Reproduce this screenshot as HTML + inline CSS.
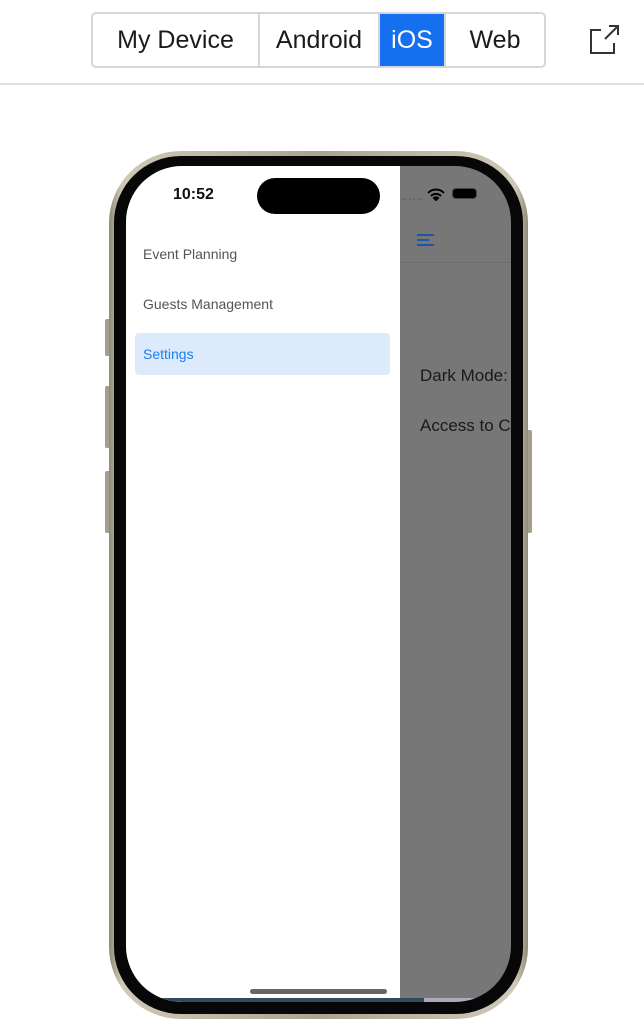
<!DOCTYPE html>
<html><head><meta charset="utf-8"><style>
*{margin:0;padding:0;box-sizing:border-box}
body{width:644px;height:1030px;background:#fff;position:relative;overflow:hidden;font-family:"Liberation Sans",sans-serif}
.seg{position:absolute;left:91px;top:12px;width:455px;height:56px;border:2px solid #d3d6da;border-radius:5px;display:flex;overflow:hidden}
.seg div{height:100%;display:flex;align-items:center;justify-content:center;font-size:25px;color:#1b1b1b;border-right:2px solid #d3d6da}
.seg div:last-child{border-right:none}
.hr{position:absolute;left:0;top:83px;width:644px;height:2px;background:#dcdee1}
.btn{position:absolute;background:#a49e8c;border-radius:2px}
.frame{position:absolute;left:109px;top:151px;width:419px;height:868px;border-radius:72px;background:linear-gradient(90deg,#8f8a7a,#cfc9b7 3%,#a9a391 50%,#cfc9b7 97%,#8f8a7a)}
.bezel{position:absolute;left:114px;top:156px;width:409px;height:858px;border-radius:67px;background:#070707}
.screen{position:absolute;left:126px;top:166px;width:385px;height:836px;border-radius:56px;overflow:hidden;background:#777}
.drawer{position:absolute;left:0;top:0;width:274px;height:100%;background:#fff}
.t{position:absolute;font-size:14px;color:#555}
</style></head><body>
<div class="seg">
<div style="width:167px">My Device</div>
<div style="width:120px">Android</div>
<div style="width:66px;background:#1570ef;color:#fff">iOS</div>
<div style="flex:1">Web</div>
</div>
<svg style="position:absolute;left:588px;top:24px" width="34" height="32" viewBox="0 0 34 32" fill="none" stroke="#333" stroke-width="2"><path d="M13 6H3v23h23V19"/><path d="M17 15L30 2M21 2h9v9"/></svg>
<div class="hr"></div>
<div class="btn" style="left:105px;top:319px;width:6px;height:37px"></div>
<div class="btn" style="left:105px;top:386px;width:6px;height:62px"></div>
<div class="btn" style="left:105px;top:471px;width:6px;height:62px"></div>
<div class="btn" style="left:526px;top:430px;width:6px;height:103px"></div>
<div class="frame"></div>
<div class="bezel"></div>
<div class="screen">
<div class="drawer">
<div class="t" style="left:47px;top:20px;font-size:16px;font-weight:bold;color:#111">10:52</div>
<div class="t" style="left:17px;top:80px">Event Planning</div>
<div class="t" style="left:17px;top:130px">Guests Management</div>
<div style="position:absolute;left:9px;top:167px;width:255px;height:42px;background:#ddeafc;border-radius:4px"></div>
<div class="t" style="left:17px;top:180px;color:#1a7ff0">Settings</div>
<div style="position:absolute;left:124px;top:823px;width:137px;height:5px;border-radius:3px;background:#666"></div>
<div style="position:absolute;left:0;top:832px;width:274px;height:4px;background:#34495e"></div>
</div>
<div style="position:absolute;left:274px;top:832px;width:24px;height:4px;background:#34495e"></div>
<div style="position:absolute;left:298px;top:832px;width:90px;height:4px;background:#aab"></div>
<div style="position:absolute;left:131px;top:12px;width:123px;height:36px;border-radius:18px;background:#000"></div>
<div style="position:absolute;left:274px;top:96px;width:111px;height:1px;background:#6d6d6d"></div>
<div style="position:absolute;left:276px;top:32px;width:20px;height:2px;border-top:2px dotted #666"></div>
<svg style="position:absolute;left:301px;top:22px" width="18" height="13" viewBox="0 0 18 13"><path d="M1 5a11 11 0 0 1 16 0M4 8a7 7 0 0 1 10 0M9 12l-2-2a3 3 0 0 1 4 0z" stroke="#000" stroke-width="2" fill="none"/></svg>
<div style="position:absolute;left:326px;top:22px;width:25px;height:11px;border-radius:4px;background:#000;border:1px solid #444"></div>
<svg style="position:absolute;left:291px;top:68px" width="18" height="12"><path d="M0 1h17M0 6h12M0 11h17" stroke="#1e55a8" stroke-width="2"/></svg>
<div class="t" style="left:294px;top:200px;font-size:17px;color:#1a1a1a">Dark Mode:</div>
<div class="t" style="left:294px;top:250px;font-size:17px;color:#1a1a1a;white-space:nowrap">Access to Contacts</div>
</div>
</body></html>
